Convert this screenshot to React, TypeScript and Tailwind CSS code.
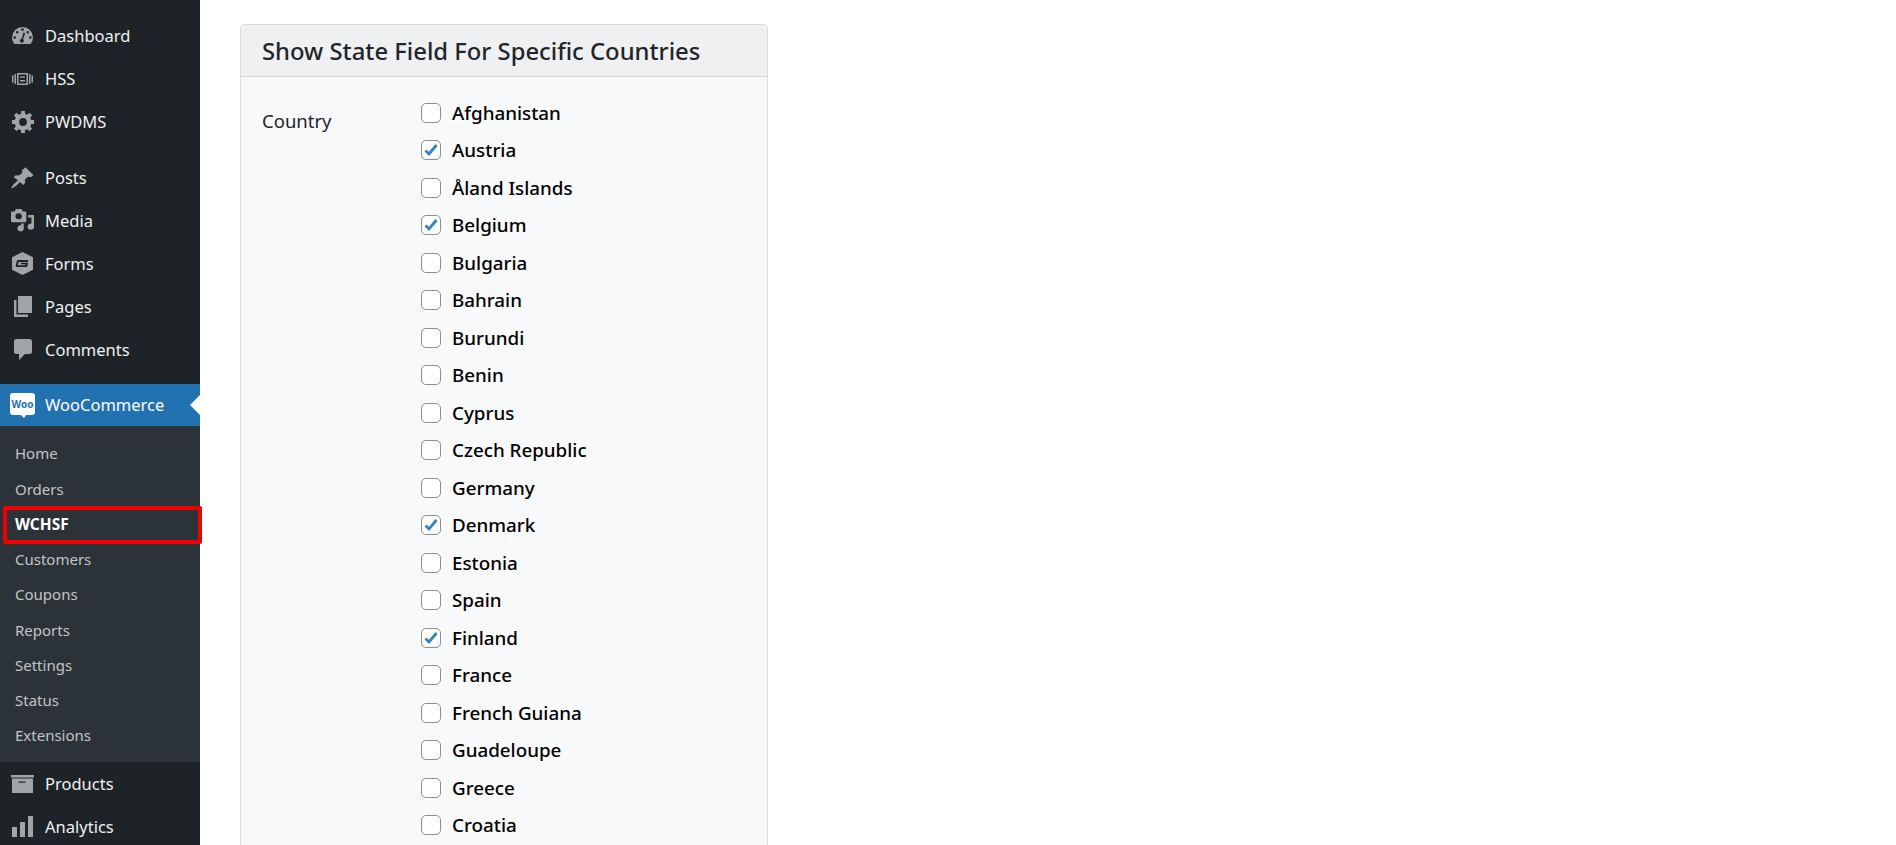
import React from "react";

const FILL = "fill-[#a0a5aa]";

function DashboardIcon() {
  return (
    <svg viewBox="2 3 16 13" className={`w-[21px] h-[17px] ${FILL}`}>
      <path d="M3.76 16h12.48A7.97 7.97 0 0 0 18 11a8 8 0 1 0-16 0c0 1.900.66 3.640 1.760 5zM10 4a1 1 0 1 1 0 2 1 1 0 0 1 0-2zM6 6a1 1 0 1 1 0 2 1 1 0 0 1 0-2zm8 0a1 1 0 1 1 0 2 1 1 0 0 1 0-2zM4 10a1 1 0 1 1 0 2 1 1 0 0 1 0-2zm12 0a1 1 0 1 1 0 2 1 1 0 0 1 0-2zm-5.200-2.900L12 8l-1.600 4.200c.4.400.6.900.6 1.300a1.500 1.500 0 0 1-3 0c0-.8.6-1.400 1.400-1.500z" fillRule="evenodd" />
    </svg>
  );
}

function HssIcon() {
  return (
    <svg viewBox="0 0 21 12" className={`w-[21px] h-[12px] ${FILL}`}>
      <path d="M5 0h11v12H5zm1.500 1.500v9h8v-9zM8 3.500h5v1.300H8zm0 3.600h5v1.300H8zM0 2.500h1.500v7H0zM2.500 1H4v10H2.500zM17 1h1.500v10H17zm2.500 1.500H21v7h-1.500z" fillRule="evenodd" />
    </svg>
  );
}

function GearIcon() {
  return (
    <svg viewBox="1 2 17 17" className={`w-[22px] h-[22px] ${FILL}`}>
      <path d="M18 12h-2.180c-.17.700-.44 1.350-.81 1.930l1.540 1.540-2.100 2.100-1.540-1.540c-.58.360-1.230.640-1.910.810V19H8v-2.180c-.68-.17-1.330-.45-1.910-.81l-1.540 1.540-2.120-2.120 1.540-1.540c-.36-.58-.64-1.230-.81-1.910H1V9.030h2.170c.17-.7.450-1.350.810-1.940L2.430 5.550l2.120-2.120 1.540 1.540c.59-.36 1.240-.64 1.940-.81V2h3v2.180c.68.170 1.320.440 1.900.800l1.540-1.540 2.120 2.120-1.540 1.540c.36.590.64 1.240.81 1.930H18zm-8.500 1.500a3 3 0 1 0 0-6 3 3 0 0 0 0 6z" fillRule="evenodd" />
    </svg>
  );
}

function PinIcon() {
  return (
    <svg viewBox="1 1 18 18" className={`w-[23px] h-[22px] ${FILL}`} preserveAspectRatio="none">
      <path d="M10.440 3.020l1.820-1.820 6.360 6.350-1.830 1.820c-1.050-.68-2.480-.57-3.410.36l-.75.750c-.92.930-1.040 2.350-.35 3.410l-1.830 1.820-2.410-2.410-2.800 2.790c-.42.420-3.380 2.710-3.800 2.290s1.860-3.390 2.280-3.810l2.790-2.790L3.100 9.360l1.830-1.820c1.050.69 2.480.570 3.400-.36l.75-.75c.93-.92 1.050-2.350.36-3.410z" />
    </svg>
  );
}

function MediaIcon() {
  return (
    <svg viewBox="1 1 18 19" className={`w-[23px] h-[23px] ${FILL}`} preserveAspectRatio="none">
      <path d="M13 11V4c0-.55-.45-1-1-1h-1.670L9 1H5L3.670 3H2c-.55 0-1 .45-1 1v7c0 .55.450 1 1 1h10c.55 0 1-.45 1-1zM7 4.500a2.500 2.500 0 1 1 0 5 2.500 2.500 0 0 1 0-5zM14.500 6H19v9.500a2.500 2.500 0 1 1-2-2.400V8h-2.500zM9 14.500V13h2v4.500a2.500 2.500 0 1 1-2-3z" fillRule="evenodd" />
    </svg>
  );
}

function FormsIcon() {
  return (
    <svg viewBox="1.500 0 17 20" className={`w-[21px] h-[23px] ${FILL}`} preserveAspectRatio="none">
      <path d="M10 0l8.500 4.500v11L10 20l-8.500-4.500v-11zM6.800 7c-.8 0-1.300.5-1.500 1.200l-.7 3.300c-.2.800.3 1.500 1 1.500h7.500c.4 0 .7-.3.800-.6l.6-3H8.800l-.3 1.300h3.800l-.2.800H6.200l.7-2.900h6.800c.4 0 .7-.3.800-.6l.2-1z" fillRule="evenodd" />
    </svg>
  );
}

function PagesIcon() {
  return (
    <svg viewBox="0 0 18 21" className={`w-[18px] h-[21px] ${FILL}`}>
      <path d="M4 0h14v17H4zM0 4h2.500v14.500H14V21H0z" />
    </svg>
  );
}

function CommentIcon() {
  return (
    <svg viewBox="0 0 18 21" className={`w-[18px] h-[21px] ${FILL}`}>
      <path d="M2.500 0h13A2.500 2.500 0 0 1 18 2.500v10a2.500 2.500 0 0 1-2.500 2.500H11l-6 6v-6H2.500A2.500 2.500 0 0 1 0 12.500v-10A2.500 2.500 0 0 1 2.500 0z" />
    </svg>
  );
}

function WooIcon() {
  return (
    <svg viewBox="0 0 25 25" className="w-[25px] h-[25px]">
      <path d="M3 0h19a3 3 0 0 1 3 3v16a3 3 0 0 1-3 3h-6l-2 3-3-3H3a3 3 0 0 1-3-3V3a3 3 0 0 1 3-3z" fill="#ffffff" />
      <text x="12.500" y="14.500" textAnchor="middle" fontSize="10" fontWeight="700" fill="#2271b1" fontFamily="'Noto Sans', sans-serif">Woo</text>
    </svg>
  );
}

function ProductsIcon() {
  return (
    <svg viewBox="0 0 23 18" className={`w-[23px] h-[18px] ${FILL}`}>
      <path d="M0 0h23v2.500H0zM1 3.500h21V18H1zm6.500 3v1.300h7V6.500z" fillRule="evenodd" />
    </svg>
  );
}

function AnalyticsIcon() {
  return (
    <svg viewBox="0 0 21 21" className={`w-[21px] h-[21px] ${FILL}`}>
      <path d="M0 11h5v10H0zM8 6h5v15H8zM16 0h5v21h-5z" />
    </svg>
  );
}

function MenuItem({ icon, label }: { icon: React.ReactNode; label: string }) {
  return (
    <div className="flex items-center h-[43px] text-[#f0f0f1] text-[16.500px]">
      <span className="w-[45px] flex items-center justify-center shrink-0">{icon}</span>
      <span className="pt-[1px]">{label}</span>
    </div>
  );
}

const subItems = ["Home", "Orders", "WCHSF", "Customers", "Coupons", "Reports", "Settings", "Status", "Extensions"];

const countries: [string, boolean][] = [
  ["Afghanistan", false],
  ["Austria", true],
  ["Åland Islands", false],
  ["Belgium", true],
  ["Bulgaria", false],
  ["Bahrain", false],
  ["Burundi", false],
  ["Benin", false],
  ["Cyprus", false],
  ["Czech Republic", false],
  ["Germany", false],
  ["Denmark", true],
  ["Estonia", false],
  ["Spain", false],
  ["Finland", true],
  ["France", false],
  ["French Guiana", false],
  ["Guadeloupe", false],
  ["Greece", false],
  ["Croatia", false],
];

function Sidebar() {
  return (
    <aside className="w-[200px] h-[845px] shrink-0 bg-[#1d2327] pt-[14px]">
      <MenuItem icon={<DashboardIcon />} label="Dashboard" />
      <MenuItem icon={<HssIcon />} label="HSS" />
      <MenuItem icon={<GearIcon />} label="PWDMS" />
      <div className="h-[13px]" />
      <MenuItem icon={<PinIcon />} label="Posts" />
      <MenuItem icon={<MediaIcon />} label="Media" />
      <MenuItem icon={<FormsIcon />} label="Forms" />
      <MenuItem icon={<PagesIcon />} label="Pages" />
      <MenuItem icon={<CommentIcon />} label="Comments" />
      <div className="h-[13px]" />

      {/* Active menu */}
      <div className="relative flex items-center h-[42px] bg-[#2271b1] text-white text-[16.500px]">
        <span className="w-[45px] flex items-center justify-center shrink-0">
          <WooIcon />
        </span>
        <span className="pt-[1px]">WooCommerce</span>
        <span className="absolute right-0 top-1/2 -translate-y-1/2 border-y-[10px] border-y-transparent border-r-[10px] border-r-white" />
      </div>
      <div className="bg-[#2c3338] pt-[10px] pb-[9px]">
        {subItems.map((item) =>
          item === "WCHSF" ? (
            <div key={item} className="relative flex items-center h-[35.250px] pl-[15px] text-[15.500px] font-bold text-white">
              {item}
              <span className="absolute left-[3px] -top-[1px] w-[199px] h-[38px] border-[4px] border-[#f00000] rounded-[2px] z-10" />
            </div>
          ) : (
            <div key={item} className="flex items-center h-[35.250px] pl-[15px] text-[15px] text-[#c3c4c7]">
              {item}
            </div>
          )
        )}
      </div>
      <MenuItem icon={<ProductsIcon />} label="Products" />
      <MenuItem icon={<AnalyticsIcon />} label="Analytics" />
    </aside>
  );
}

export default function App() {
  return (
    <div className="flex h-[845px] overflow-hidden bg-white font-['Noto_Sans',sans-serif]">
      <Sidebar />
      <main className="flex-1 pl-[40px] pt-[24px]">
        <div className="w-[528px] bg-[#f8f9fa] border border-[#dadbdd] rounded-[4px]">
          <h2 className="h-[52px] flex items-center px-[21px] pt-[2px] bg-[#eff0f2] border-b border-[#d5d6d9] rounded-t-[4px] text-[23.800px] font-medium text-[#212529]">
            Show State Field For Specific Countries
          </h2>
          <div className="flex pl-[21px] pt-[17px] pb-[40px]">
            <div className="w-[159px] pt-[13px] text-[18.500px] text-[#212529]">Country</div>
            <ul>
              {countries.map(([name, checked]) => (
                <li key={name} className="flex items-center gap-[11px] h-[37.500px] text-[18.800px] font-medium text-black">
                  <span className="w-[20px] h-[20px] bg-white border border-[#8f8f8f] rounded-[5px] flex items-center justify-center">
                    {checked && (
                      <svg viewBox="0 0 16 16" className="w-[16px] h-[16px]">
                        <path d="M2.500 8.500l3.500 3.500 7.500-9" fill="none" stroke="#3582c4" strokeWidth="2.800" />
                      </svg>
                    )}
                  </span>
                  {name}
                </li>
              ))}
            </ul>
          </div>
        </div>
      </main>
    </div>
  );
}
